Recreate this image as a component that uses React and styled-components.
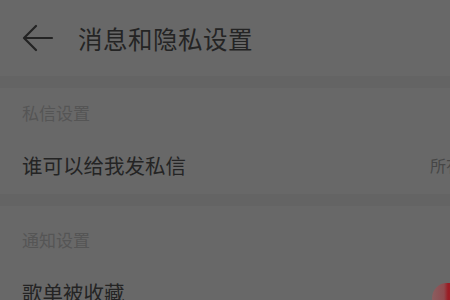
import React from "react";
import styled, { createGlobalStyle } from "styled-components";

const GlobalStyle = createGlobalStyle`
  html, body {
    margin: 0;
    padding: 0;
    background: #646464;
    overflow: hidden;
  }
  body {
    font-family: "Noto Sans CJK SC", "Noto Sans", sans-serif;
  }
`;

const Viewport = styled.div`
  width: 450px;
  height: 300px;
  overflow: hidden;
`;

const Screen = styled.div`
  width: 520px;
  display: flex;
  flex-direction: column;
  gap: 12px;
  background: #646464;
`;

const Header = styled.header`
  height: 76px;
  display: flex;
  align-items: center;
  gap: 24px;
  padding: 0 22px;
  background: #686868;
`;

const BackButton = styled.button`
  border: none;
  background: transparent;
  padding: 0;
  width: 32px;
  height: 28px;
  display: flex;
  align-items: center;
  cursor: pointer;
`;

const Title = styled.h1`
  margin: 0;
  font-size: 24.5px;
  font-weight: 400;
  color: #242424;
  letter-spacing: 0.5px;
`;

const Card = styled.section`
  background: #686868;
  display: flex;
  flex-direction: column;
  padding-top: ${(p) => p.$top || 0}px;
`;

const SectionLabel = styled.div`
  height: 48px;
  display: flex;
  align-items: center;
  padding: 0 22px;
  font-size: 17px;
  color: #555555;
`;

const Row = styled.div`
  height: 58px;
  display: flex;
  align-items: center;
  justify-content: space-between;
  padding: 0 22px;
`;

const RowText = styled.span`
  font-size: 20.5px;
  color: #242424;
`;

const Value = styled.span`
  display: flex;
  align-items: center;
  gap: 4px;
  font-size: 16px;
  color: #464646;
`;

const Toggle = styled.span`
  width: 52px;
  height: 30px;
  margin: 12px 14px 0 0;
  border-radius: 15px;
  background: linear-gradient(90deg, #8a5e60 0px, #8f4a4e 12px, #9a1c24 16px);
`;

const BackIcon = () => (
  <svg width="32" height="28" viewBox="0 0 32 28" fill="none">
    <path d="M30 14H3M14 2L2 14l12 12" stroke="#232323" strokeWidth="2.2" strokeLinecap="round" strokeLinejoin="round" />
  </svg>
);

const Chevron = () => (
  <svg width="16" height="16" viewBox="0 0 16 16" fill="none">
    <path d="M6 3l5 5-5 5" stroke="#464646" strokeWidth="1.6" />
  </svg>
);

export default function App() {
  return (
    <Viewport>
      <GlobalStyle />
      <Screen>
        <Header>
          <BackButton type="button">
            <BackIcon />
          </BackButton>
          <Title>消息和隐私设置</Title>
        </Header>
        <Card>
          <SectionLabel>私信设置</SectionLabel>
          <Row>
            <RowText>谁可以给我发私信</RowText>
            <Value>
              所有人
              <Chevron />
            </Value>
          </Row>
        </Card>
        <Card $top={9}>
          <SectionLabel>通知设置</SectionLabel>
          <Row>
            <RowText>歌单被收藏</RowText>
            <Toggle />
          </Row>
        </Card>
      </Screen>
    </Viewport>
  );
}
